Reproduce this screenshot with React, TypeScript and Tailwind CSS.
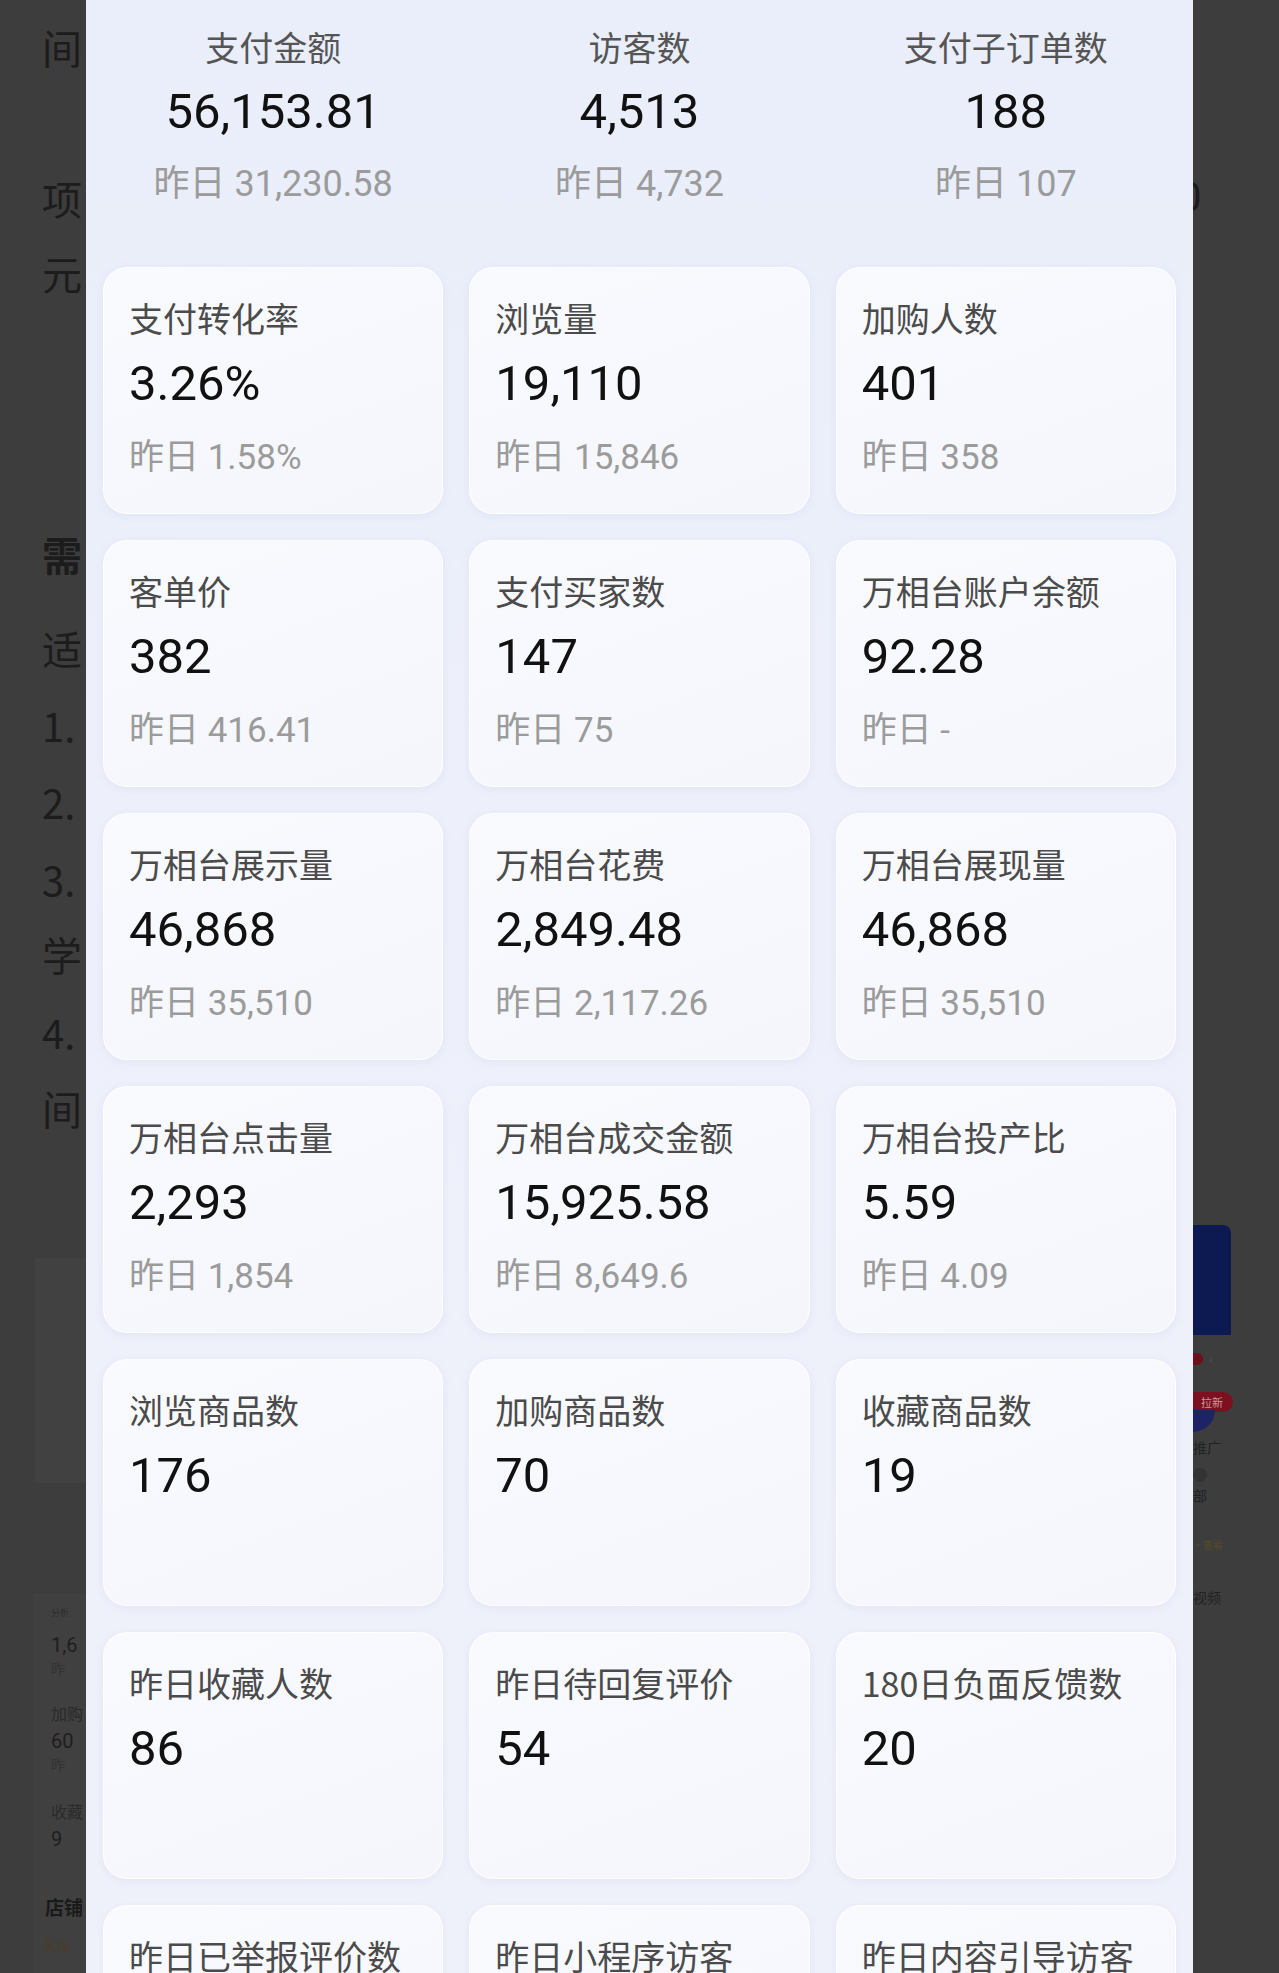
import React from 'react';

interface Metric {
  label: string;
  value?: string;
  prev?: string;
}

const topMetrics: Metric[] = [
  { label: '支付金额', value: '56,153.81', prev: '31,230.58' },
  { label: '访客数', value: '4,513', prev: '4,732' },
  { label: '支付子订单数', value: '188', prev: '107' },
];

const cards: Metric[] = [
  { label: '支付转化率', value: '3.26%', prev: '1.58%' },
  { label: '浏览量', value: '19,110', prev: '15,846' },
  { label: '加购人数', value: '401', prev: '358' },
  { label: '客单价', value: '382', prev: '416.41' },
  { label: '支付买家数', value: '147', prev: '75' },
  { label: '万相台账户余额', value: '92.28', prev: '-' },
  { label: '万相台展示量', value: '46,868', prev: '35,510' },
  { label: '万相台花费', value: '2,849.48', prev: '2,117.26' },
  { label: '万相台展现量', value: '46,868', prev: '35,510' },
  { label: '万相台点击量', value: '2,293', prev: '1,854' },
  { label: '万相台成交金额', value: '15,925.58', prev: '8,649.6' },
  { label: '万相台投产比', value: '5.59', prev: '4.09' },
  { label: '浏览商品数', value: '176' },
  { label: '加购商品数', value: '70' },
  { label: '收藏商品数', value: '19' },
  { label: '昨日收藏人数', value: '86' },
  { label: '昨日待回复评价', value: '54' },
  { label: '180日负面反馈数', value: '20' },
  { label: '昨日已举报评价数' },
  { label: '昨日小程序访客' },
  { label: '昨日内容引导访客' },
];

const cjk = "font-['Noto_Sans_CJK_SC',sans-serif]";
const num = "font-['Roboto','Noto_Sans_CJK_SC',sans-serif]";

// dimmed page text behind the sheet
const leftLines = [
  { text: '间', mt: 'mt-[17px]' },
  { text: '项', mt: 'mt-[91px]' },
  { text: '元', mt: 'mt-[15px]' },
  { text: '需', mt: 'mt-[221px]', bold: true },
  { text: '适', mt: 'mt-[34px]' },
  { text: '1.', mt: 'mt-[17px]' },
  { text: '2.', mt: 'mt-[17px]' },
  { text: '3.', mt: 'mt-[17px]' },
  { text: '学', mt: 'mt-[15px]' },
  { text: '4.', mt: 'mt-[18px]' },
  { text: '间', mt: 'mt-[16px]' },
];

const LeftStrip = () => (
  <div className={`w-[86px] shrink-0 overflow-hidden whitespace-nowrap ${cjk}`}>
    <div className="pl-[42px]">
      {leftLines.map((l, i) => (
        <div
          key={i}
          className={`${l.mt} h-[60px] leading-[60px] text-[40px] text-[#1c1c1c] ${l.bold ? 'font-bold' : ''}`}
        >
          {l.text}
        </div>
      ))}
    </div>
    <div className="mt-[120px] ml-[35px] h-[225px] bg-[#414141]" />
    <div className="mt-[110px] ml-[33px] h-[430px] bg-[#404040] pl-[18px] pt-[14px] text-[#1e1e1e]">
      <div className="text-[9px] leading-[12px] text-[#2c2c2c]">分析</div>
      <div className="mt-[14px] text-[20px] leading-[24px] font-['Roboto',sans-serif]">1,6</div>
      <div className="mt-[2px] text-[14px] leading-[18px] text-[#333]">昨</div>
      <div className="mt-[26px] text-[16px] leading-[20px] text-[#2a2a2a]">加购</div>
      <div className="mt-[6px] text-[20px] leading-[24px] font-['Roboto',sans-serif]">60</div>
      <div className="mt-[2px] text-[14px] leading-[18px] text-[#333]">昨</div>
      <div className="mt-[28px] text-[16px] leading-[20px] text-[#2a2a2a]">收藏</div>
      <div className="mt-[6px] text-[20px] leading-[24px] font-['Roboto',sans-serif]">9</div>
      <div className="mt-[44px] ml-[-6px] text-[19px] leading-[24px] font-bold text-[#1a1a1a]">店铺</div>
      <div className="mt-[18px] ml-[-8px] text-[13px] leading-[16px] text-[#4a3d22]">关注</div>
    </div>
  </div>
);

const RightStrip = () => (
  <div className={`w-[86px] shrink-0 overflow-hidden whitespace-nowrap ${cjk}`}>
    <div className={`mt-[168px] -ml-[14px] h-[60px] leading-[60px] text-[40px] text-[#1c1c1c] ${num}`}>0</div>
    <div className="mt-[997px] w-[38px] h-[110px] rounded-tr-[8px] bg-[#0d1a52]" />
    <div className="mt-[16px] flex items-center gap-[6px]">
      <span className="w-[10px] h-[12px] rounded-r-full bg-[#6e0f1d]" />
      <span className="text-[10px] text-[#5a5a5a]">›</span>
    </div>
    <div className="mt-[26px] w-[40px] h-[20px] rounded-r-full bg-[#7c1020] text-[11px] leading-[20px] text-[#c99] pl-[8px]">拉新</div>
    <div className="-mt-[2px] w-[22px] h-[22px] rounded-br-full bg-[#1e2366]" />
    <div className="mt-[6px] text-[14px] leading-[18px] text-[#222]">推广</div>
    <div className="mt-[12px] w-[14px] h-[14px] rounded-full bg-[#333]" />
    <div className="mt-[4px] text-[14px] leading-[18px] text-[#222]">部</div>
    <div className="mt-[34px] text-[10px] leading-[14px] text-[#5a4a22]">·查看</div>
    <div className="mt-[36px] text-[14px] leading-[18px] text-[#222]">视频</div>
  </div>
);

const Card = ({ m }: { m: Metric }) => (
  <div className="h-[247px] rounded-[24px] border border-white/80 bg-[linear-gradient(160deg,#f9fafe_0%,#f4f6fc_100%)] px-[25px] pt-[30px] shadow-[0_2px_8px_rgba(170,185,220,0.18)]">
    <div className={`h-[40px] leading-[40px] text-[34px] text-[#4b4b4b] whitespace-nowrap ${cjk}`}>{m.label}</div>
    {m.value && (
      <div className={`mt-[18px] h-[56px] leading-[56px] text-[49px] text-[#111] ${num}`}>{m.value}</div>
    )}
    {m.prev && (
      <div className={`mt-[26px] h-[40px] leading-[40px] text-[35px] text-[#9b9b9b] ${num}`}>
        昨日 {m.prev}
      </div>
    )}
  </div>
);

export default function App() {
  return (
    <div className="flex w-[1279px] h-[1973px] overflow-hidden bg-[#3d3d3d]">
      <LeftStrip />
      <main className="relative z-10 w-[1107px] shrink-0 bg-[linear-gradient(180deg,#e9eefa_0%,#edf0fa_40%,#eff1fa_100%)] px-[17px]">
        <div className="grid grid-cols-3 gap-x-[26px] pt-[27px] text-center">
          {topMetrics.map((m) => (
            <div key={m.label}>
              <div className={`h-[40px] leading-[40px] text-[34px] text-[#555] ${cjk}`}>{m.label}</div>
              <div className={`mt-[17px] h-[56px] leading-[56px] text-[49px] text-[#111] ${num}`}>{m.value}</div>
              <div className={`mt-[24px] h-[40px] leading-[40px] text-[36px] text-[#9b9b9b] ${num}`}>昨日 {m.prev}</div>
            </div>
          ))}
        </div>
        <div className="mt-[63px] grid grid-cols-3 gap-x-[26px] gap-y-[26px]">
          {cards.map((m, i) => (
            <Card key={i} m={m} />
          ))}
        </div>
      </main>
      <RightStrip />
    </div>
  );
}
